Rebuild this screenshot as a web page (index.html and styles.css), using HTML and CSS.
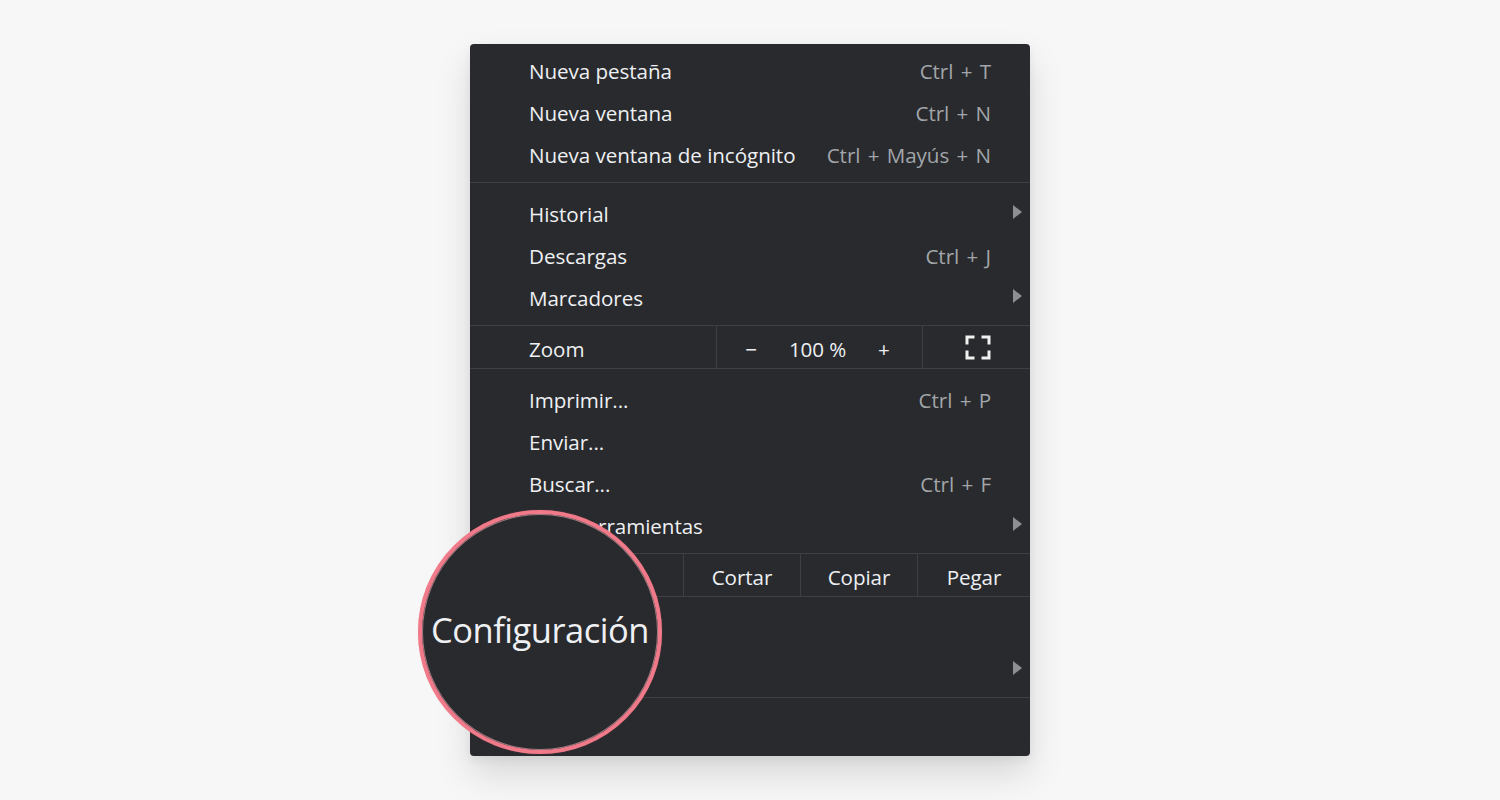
FILE: index.html
```html
<!DOCTYPE html>
<html lang="es">
<head>
<meta charset="utf-8">
<title>Menú de Chrome</title>
<link rel="stylesheet" href="styles.css">
</head>
<body>
<div class="stage">
  <div class="menu">
    <div class="group first">
      <div class="row"><span class="label">Nueva pestaña</span><span class="key">Ctrl + T</span></div>
      <div class="row"><span class="label">Nueva ventana</span><span class="key">Ctrl + N</span></div>
      <div class="row"><span class="label">Nueva ventana de incógnito</span><span class="key">Ctrl + Mayús + N</span></div>
    </div>
    <div class="sep"></div>
    <div class="group">
      <div class="row sub"><span class="label">Historial</span><span class="arrow"></span></div>
      <div class="row"><span class="label">Descargas</span><span class="key">Ctrl + J</span></div>
      <div class="row sub"><span class="label">Marcadores</span><span class="arrow"></span></div>
    </div>
    <div class="sep"></div>
    <div class="zoom-row">
      <div class="cell zoom-label"><span class="label">Zoom</span></div>
      <div class="cell zoom-ctrl">
        <span class="zbtn minus">−</span>
        <span class="zval">100 %</span>
        <span class="zbtn plus">+</span>
      </div>
      <div class="cell zoom-full">
        <svg width="26" height="25" viewBox="0 0 26 25" fill="none" stroke="#f1f1f1" stroke-width="3" stroke-linecap="square">
          <path d="M2 8V2h6"/>
          <path d="M18 2h6v6"/>
          <path d="M24 17v6h-6"/>
          <path d="M8 23H2v-6"/>
        </svg>
      </div>
    </div>
    <div class="sep"></div>
    <div class="group">
      <div class="row"><span class="label">Imprimir...</span><span class="key">Ctrl + P</span></div>
      <div class="row"><span class="label">Enviar...</span></div>
      <div class="row"><span class="label">Buscar...</span><span class="key">Ctrl + F</span></div>
      <div class="row sub"><span class="label">Más herramientas</span><span class="arrow"></span></div>
    </div>
    <div class="sep"></div>
    <div class="edit-row">
      <div class="cell edit-label"><span class="label covered">Editar</span></div>
      <div class="cell ebtn">Cortar</div>
      <div class="cell ebtn">Copiar</div>
      <div class="cell ebtn last">Pegar</div>
    </div>
    <div class="sep"></div>
    <div class="group">
      <div class="row"><span class="label covered">Configuración</span></div>
      <div class="row sub"><span class="label covered">Ayuda</span><span class="arrow"></span></div>
    </div>
    <div class="sep"></div>
    <div class="group">
      <div class="row"><span class="label covered">Salir</span></div>
    </div>
    <div class="lens"><span>Configuración</span></div>
  </div>
</div>
</body>
</html>
```
FILE: styles.css
```css
html, body {
  margin: 0;
  padding: 0;
  background: #f7f7f7;
  height: 800px;
  overflow: hidden;
}
.stage {
  display: flex;
  justify-content: center;
  padding-top: 44px;
}
.menu {
  position: relative;
  width: 560px;
  background: #292a2d;
  border-radius: 4px;
  box-shadow: 0 18px 36px rgba(0, 0, 0, 0.13), 0 4px 10px rgba(0, 0, 0, 0.06);
  font-family: "Open Sans", "Noto Sans", sans-serif;
  font-size: 20.6px;
  letter-spacing: -0.05px;
  color: #eef0f3;
}
.group {
  padding: 8px 0;
}
.group.first {
  padding-top: 4px;
}
.sep {
  height: 1px;
  background: #3e3f42;
}
.row {
  height: 42px;
  box-sizing: border-box;
  display: flex;
  align-items: center;
  justify-content: space-between;
  padding: 3px 39px 0 59px;
}
.row.sub {
  padding-right: 8px;
}
.covered {
  visibility: hidden;
}
.key {
  color: #a2a5aa;
  word-spacing: 2px;
}
.arrow {
  width: 0;
  height: 0;
  margin-top: -3px;
  border-top: 7px solid transparent;
  border-bottom: 7px solid transparent;
  border-left: 9px solid #8d8f93;
}
.zoom-row, .edit-row {
  display: flex;
  height: 42px;
}
.cell {
  display: flex;
  align-items: center;
  height: 100%;
  box-sizing: border-box;
  padding-top: 4px;
}
.zoom-label {
  width: 247px;
  padding-left: 59px;
  border-right: 1px solid #3e3f42;
}
.zoom-ctrl {
  width: 206px;
  border-right: 1px solid #3e3f42;
  justify-content: space-between;
  padding-left: 26px;
  padding-right: 30px;
}
.zbtn {
  width: 16px;
  text-align: center;
}
.zval {
  letter-spacing: -0.1px;
}
.zoom-full {
  flex: 1;
  justify-content: center;
  padding-top: 0;
  padding-left: 3px;
}
.edit-label {
  width: 214px;
  padding-left: 59px;
  border-right: 1px solid #3e3f42;
}
.ebtn {
  width: 117px;
  justify-content: center;
  border-right: 1px solid #3e3f42;
}
.ebtn.last {
  border-right: none;
  flex: 1;
}
.lens {
  position: absolute;
  left: -52px;
  top: 466px;
  width: 244px;
  height: 244px;
  box-sizing: border-box;
  border-radius: 50%;
  background: #292a2d;
  border: 4px solid #f07a89;
  box-shadow: inset 0 0 0 1px rgba(255, 190, 198, 0.55), 0 0 1px rgba(240, 122, 137, 0.6);
  display: flex;
  align-items: center;
  justify-content: center;
}
.lens span {
  font-size: 34.5px;
  color: #eef0f3;
  letter-spacing: -0.5px;
  margin-top: -6px;
  white-space: nowrap;
}
```
